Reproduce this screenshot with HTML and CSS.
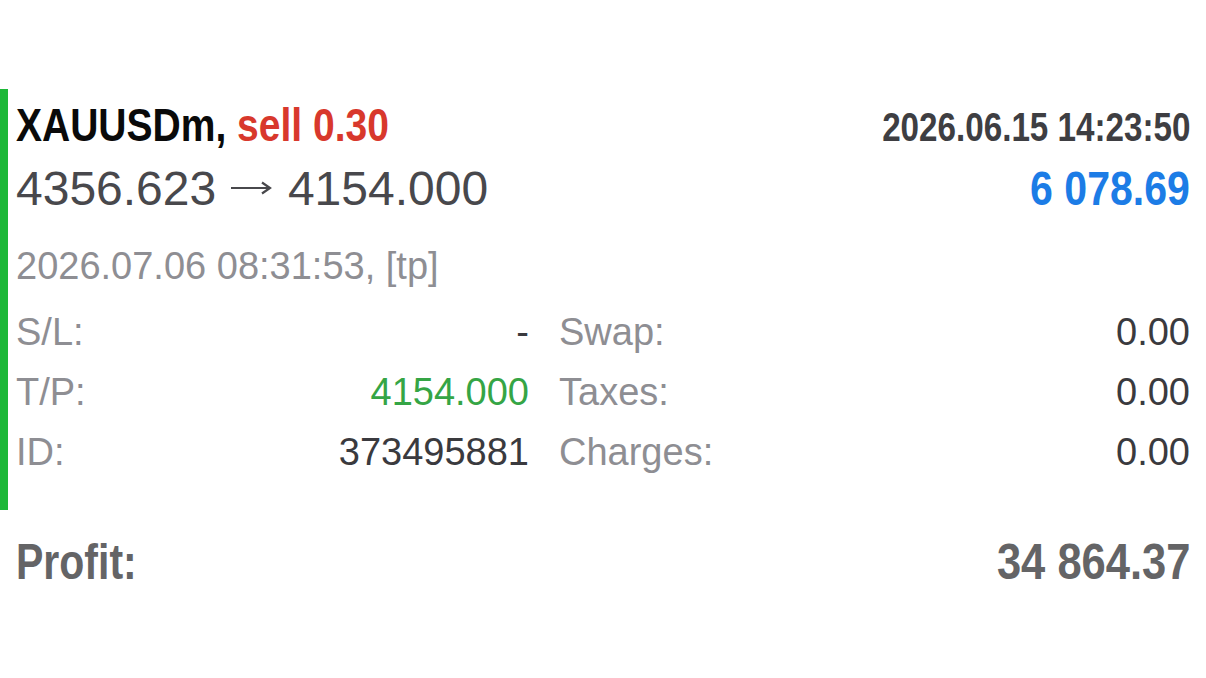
FILE: index.html
```html
<!DOCTYPE html>
<html>
<head>
    <title>Deal XAUUSDm</title>
    <link rel="stylesheet" href="styles.css">
</head>
<body>
    <div class="deal">
        <div class="head">
            <span class="narrow symbol">XAUUSDm, <span class="sell">sell 0.30</span></span>
            <span class="narrow to-right open-time">2026.06.15 14:23:50</span>
        </div>
        <div class="prices">
            <span class="price-path">4356.623 <svg class="arrow" width="42" height="16" viewBox="0 0 42 16"><path d="M1 8H40M32 2.5L40 8L32 13.5" fill="none" stroke="#48484c" stroke-width="2.2"/></svg> 4154.000</span>
            <span class="narrow to-right deal-profit">6 078.69</span>
        </div>
        <div class="close-time">2026.07.06 08:31:53, [tp]</div>
        <div class="stats">
            <div class="stat"><span class="label">S/L:</span><span class="value">-</span></div>
            <div class="stat"><span class="label">Swap:</span><span class="value">0.00</span></div>
            <div class="stat"><span class="label">T/P:</span><span class="value tp">4154.000</span></div>
            <div class="stat"><span class="label">Taxes:</span><span class="value">0.00</span></div>
            <div class="stat"><span class="label">ID:</span><span class="value">373495881</span></div>
            <div class="stat"><span class="label">Charges:</span><span class="value">0.00</span></div>
        </div>
    </div>
    <div class="total">
        <span class="narrow">Profit:</span>
        <span class="narrow to-right total-value">34 864.37</span>
    </div>
</body>
</html>
```

FILE: styles.css
```css
body {
    margin: 0;
    background-color: #fff;
    font-family: "Liberation Sans", Arial, sans-serif;
}

/* no condensed face installed, so squeeze the bold one */
.narrow {
    display: inline-block;
    font-weight: bold;
    transform: scaleX(0.82);
    transform-origin: left center;
}

.narrow.to-right {
    transform-origin: right center;
}

.deal {
    margin-top: 89px;
    padding: 10px 16px 28px 8px;
    border-left: 8px solid #1db838;
}

.head,
.prices,
.total {
    display: flex;
    justify-content: space-between;
    align-items: baseline;
}

.head {
    line-height: 52px;
}

.symbol {
    font-size: 47px;
    transform: scaleX(0.83);
    color: #0a0a0a;
}

.sell {
    color: #d8382c;
}

.open-time {
    font-size: 40px;
    transform: scaleX(0.83);
    color: #3e3e42;
}

.prices {
    margin-top: 6px;
    line-height: 60px;
}

.price-path {
    font-size: 48px;
    color: #48484c;
}

.arrow {
    margin: 0 3px 0 0;
    vertical-align: 9px;
}

.deal-profit {
    font-size: 48px;
    transform: scaleX(0.855);
    color: #1c7ce6;
}

.close-time {
    margin-top: 17px;
    font-size: 38px;
    line-height: 60px;
    color: #8e8e93;
}

.stats {
    display: grid;
    grid-template-columns: 513px 1fr;
    column-gap: 30px;
    margin-top: 6px;
    font-size: 38px;
    line-height: 60px;
}

.stat {
    display: flex;
    justify-content: space-between;
}

.label {
    color: #8e8e93;
}

.value {
    color: #3a3a3e;
}

.value.tp {
    color: #35a545;
}

.total {
    margin-top: 22px;
    padding: 0 16px;
    font-size: 50px;
    line-height: 60px;
    color: #646466;
}

.total-value {
    transform: scaleX(0.87);
}
```
